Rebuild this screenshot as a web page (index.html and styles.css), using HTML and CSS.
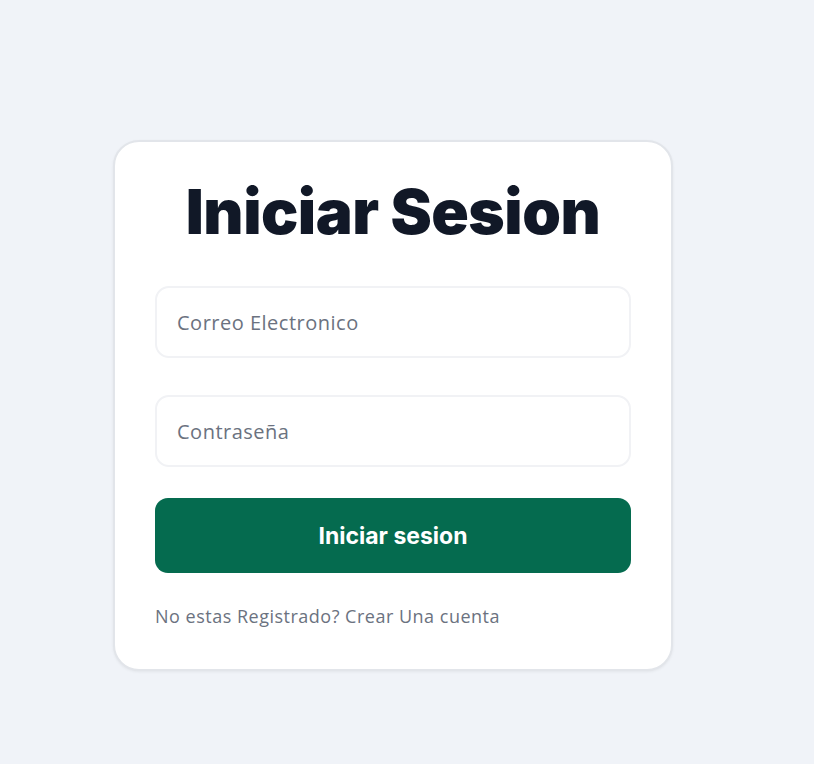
FILE: index.html
```html
<!DOCTYPE html>
<html lang="es">
<head>
<meta charset="utf-8">
<title>Iniciar Sesion</title>
<link rel="stylesheet" href="styles.css">
</head>
<body>
<main class="page">
  <section class="card">
    <h1 class="title">Iniciar Sesion</h1>
    <form class="form">
      <input class="field" type="email" placeholder="Correo Electronico">
      <input class="field" type="password" placeholder="Contraseña">
      <button class="btn" type="button">Iniciar sesion</button>
    </form>
    <p class="note">No estas Registrado? Crear Una cuenta</p>
  </section>
</main>
</body>
</html>
```
FILE: styles.css
```css
* { box-sizing: border-box; }
html, body { margin: 0; padding: 0; }
body {
  background: #f0f3f8;
  font-family: "Open Sans", "Noto Sans", sans-serif;
  min-height: 764px;
}
.page {
  padding-top: 140px;
  padding-left: 113px;
}
.card {
  width: 560px;
  background: #ffffff;
  border: 2px solid #e2e5ea;
  border-radius: 26px;
  padding: 28px 40px 42px;
  box-shadow: 0 1px 3px rgba(0,0,0,0.06);
}
.title {
  margin: 0;
  text-align: center;
  font-family: "Inter", sans-serif;
  font-weight: 900;
  font-size: 62px;
  line-height: 84px;
  color: #111827;
  letter-spacing: -0.5px;
}
.form {
  display: flex;
  flex-direction: column;
  margin-top: 32px;
}
.field {
  height: 72px;
  border: 2px solid #f1f2f5;
  border-radius: 14px;
  padding: 0 20px;
  font-family: "Open Sans", sans-serif;
  font-size: 20px;
  letter-spacing: 0.5px;
  color: #111827;
  background: #fff;
  outline: none;
}
.field + .field { margin-top: 37px; }
.field::placeholder { color: #6b7280; }
.btn {
  margin-top: 31px;
  height: 75px;
  border: none;
  border-radius: 13px;
  background: #056b4f;
  color: #ffffff;
  font-family: "Inter", sans-serif;
  font-weight: 700;
  font-size: 23px;
}
.note {
  margin: 32px 0 0;
  font-size: 18px;
  letter-spacing: 0.5px;
  line-height: 22px;
  color: #6b7280;
}
```
